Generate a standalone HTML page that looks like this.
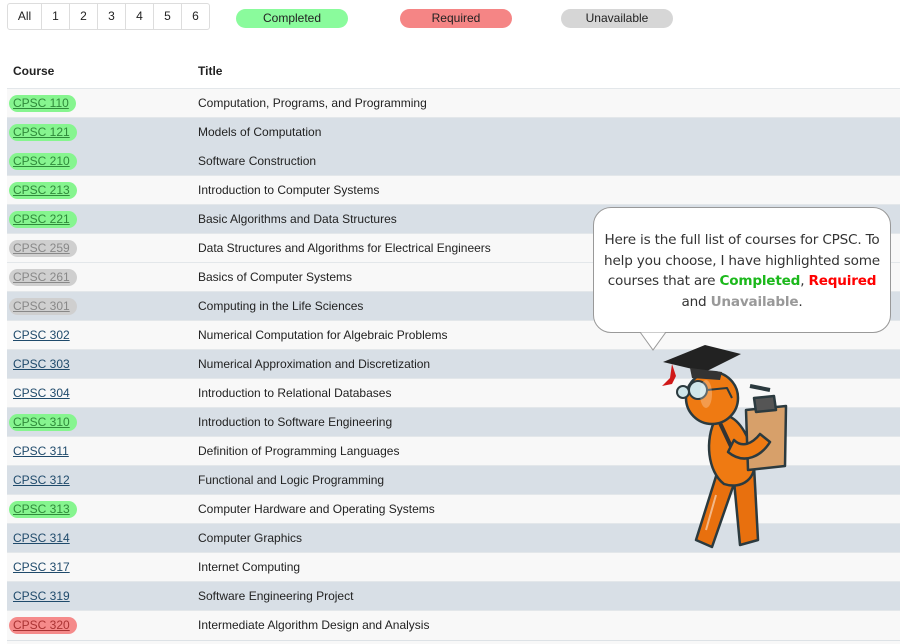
<!DOCTYPE html>
<html><head><meta charset="utf-8"><style>
*{margin:0;padding:0;box-sizing:border-box}
body{width:900px;height:644px;overflow:hidden;background:#fff;font-family:"Liberation Sans",Arial,sans-serif;font-size:12px;color:#222;position:relative}
.pager{position:absolute;left:7px;top:3px;height:27px;border:1px solid #ddd;border-radius:3px;display:flex;background:#fff}
.pager span{display:block;height:25px;line-height:25px;text-align:center;border-left:1px solid #ddd;width:28px;font-size:12px}
.pager span:first-child{border-left:none;width:33px}
.leg{position:absolute;top:9px;height:19px;line-height:19px;border-radius:10px;text-align:center;font-size:12px;width:112px}
.hdr{position:absolute;top:64px;font-weight:bold;font-size:12px}
.row{position:absolute;left:7px;width:893px;height:29px;border-top:1px solid #e3e7ea}
.row.g{background:#d8dfe6}.row.l{background:#f8f8f8}
.row.nb{border-top-color:#d8dfe6}
.row a{position:absolute;left:6px;top:6px;color:#1f4a6b;text-decoration:underline;font-size:12px;line-height:17px}
.row a.c,.row a.r,.row a.u{left:2px;padding:0 7px 0 4px;border-radius:9px}
.row a.c{background:#86f58f;color:#2f8a3a}
.row a.r{background:#f58a8a;color:#a33}
.row a.u{background:#cfcfcf;color:#888}
.row .t{position:absolute;left:191px;top:7px;font-size:12px;color:#222}
.bubble{position:absolute;left:593px;top:207px;width:298px;height:126px;background:#fff;border:1px solid #999;border-radius:18px;text-align:center;font-family:"DejaVu Sans",sans-serif;font-size:13.6px;line-height:20.5px;color:#333;padding-top:22px;letter-spacing:-0.2px;white-space:nowrap}
.bubble b.g{color:#1bb81b}.bubble b.r{color:#f00}.bubble b.u{color:#999}
</style></head><body>
<div class="pager"><span>All</span><span>1</span><span>2</span><span>3</span><span>4</span><span>5</span><span>6</span></div>
<div class="leg" style="left:236px;background:#8afb9c">Completed</div>
<div class="leg" style="left:400px;background:#f58585">Required</div>
<div class="leg" style="left:561px;background:#d6d6d6">Unavailable</div>
<div class="hdr" style="left:13px">Course</div>
<div class="hdr" style="left:198px">Title</div>

<div class="row l" style="top:88px"><a class="c">CPSC 110</a><span class="t">Computation, Programs, and Programming</span></div>
<div class="row g" style="top:117px"><a class="c">CPSC 121</a><span class="t">Models of Computation</span></div>
<div class="row g nb" style="top:146px"><a class="c">CPSC 210</a><span class="t">Software Construction</span></div>
<div class="row l" style="top:175px"><a class="c">CPSC 213</a><span class="t">Introduction to Computer Systems</span></div>
<div class="row g" style="top:204px"><a class="c">CPSC 221</a><span class="t">Basic Algorithms and Data Structures</span></div>
<div class="row l" style="top:233px"><a class="u">CPSC 259</a><span class="t">Data Structures and Algorithms for Electrical Engineers</span></div>
<div class="row l" style="top:262px"><a class="u">CPSC 261</a><span class="t">Basics of Computer Systems</span></div>
<div class="row g" style="top:291px"><a class="u">CPSC 301</a><span class="t">Computing in the Life Sciences</span></div>
<div class="row l" style="top:320px"><a>CPSC 302</a><span class="t">Numerical Computation for Algebraic Problems</span></div>
<div class="row g" style="top:349px"><a>CPSC 303</a><span class="t">Numerical Approximation and Discretization</span></div>
<div class="row l" style="top:378px"><a>CPSC 304</a><span class="t">Introduction to Relational Databases</span></div>
<div class="row g" style="top:407px"><a class="c">CPSC 310</a><span class="t">Introduction to Software Engineering</span></div>
<div class="row l" style="top:436px"><a>CPSC 311</a><span class="t">Definition of Programming Languages</span></div>
<div class="row g" style="top:465px"><a>CPSC 312</a><span class="t">Functional and Logic Programming</span></div>
<div class="row l" style="top:494px"><a class="c">CPSC 313</a><span class="t">Computer Hardware and Operating Systems</span></div>
<div class="row g" style="top:523px"><a>CPSC 314</a><span class="t">Computer Graphics</span></div>
<div class="row l" style="top:552px"><a>CPSC 317</a><span class="t">Internet Computing</span></div>
<div class="row g" style="top:581px"><a>CPSC 319</a><span class="t">Software Engineering Project</span></div>
<div class="row l" style="top:610px;height:34px"><a class="r">CPSC 320</a><span class="t">Intermediate Algorithm Design and Analysis</span></div>
<div style="position:absolute;left:7px;top:640px;width:893px;height:1px;background:#dde2e6"></div>

<div class="bubble">Here is the full list of courses for CPSC. To<br>help you choose, I have highlighted some<br>courses that are <b class="g">Completed</b>, <b class="r">Required</b><br>and <b class="u">Unavailable</b>.</div>
<svg style="position:absolute;left:0;top:0" width="900" height="644">
<path d="M640 332 L653 350 L666 332 Z" fill="#fff" stroke="#999"/>
<path d="M639 331 L667 331" stroke="#fff" stroke-width="2"/>
<g stroke="#2b3a3f" stroke-width="2.5" stroke-linejoin="round">
<path d="M718 470 L696 540 L712 547 L736 478 Z" fill="#e8700e"/>
<path d="M733 470 L740 545 L758 540 L754 466 Z" fill="#e8700e"/>
<path d="M716 418 C704 440 708 472 724 484 C742 490 758 478 754 458 C750 438 740 420 728 416 Z" fill="#ef7a12"/>
<path d="M720 423 L735 455 L742 452" stroke="#333" stroke-width="4" fill="none"/>
<path d="M746 410 L786 406 L785 466 L748 470 Z" fill="#d7a06a"/>
<path d="M754 398 L774 396 L776 410 L756 412 Z" fill="#555"/>
<path d="M750 386 L770 390" stroke-width="4"/>
<path d="M728 452 C745 466 762 455 770 442 L760 434 C752 444 742 448 734 440 Z" fill="#ef7a12"/>
<circle cx="712" cy="398" r="26" fill="#ef7a12"/>
<circle cx="698" cy="390" r="9" fill="#cfe6ea" stroke-width="2"/>
<circle cx="683" cy="392" r="6" fill="#cfe6ea" stroke-width="2"/>
<path d="M707 390 L727 388 L732 398" fill="none" stroke-width="2"/>
</g>
<path d="M663 362 L705 345 L741 354 L705 372 Z" fill="#222"/>
<path d="M690 368 L722 372 L720 380 L692 378 Z" fill="#333"/>
<path d="M672 364 L670 378 L662 386 L672 384 L676 376" fill="#d01818"/>
<ellipse cx="706" cy="394" rx="6" ry="14" fill="#fff" opacity="0.25"/>
<path d="M716 495 L706 530" stroke="#fff" stroke-width="2" opacity="0.5"/>
</svg>
</body></html>
